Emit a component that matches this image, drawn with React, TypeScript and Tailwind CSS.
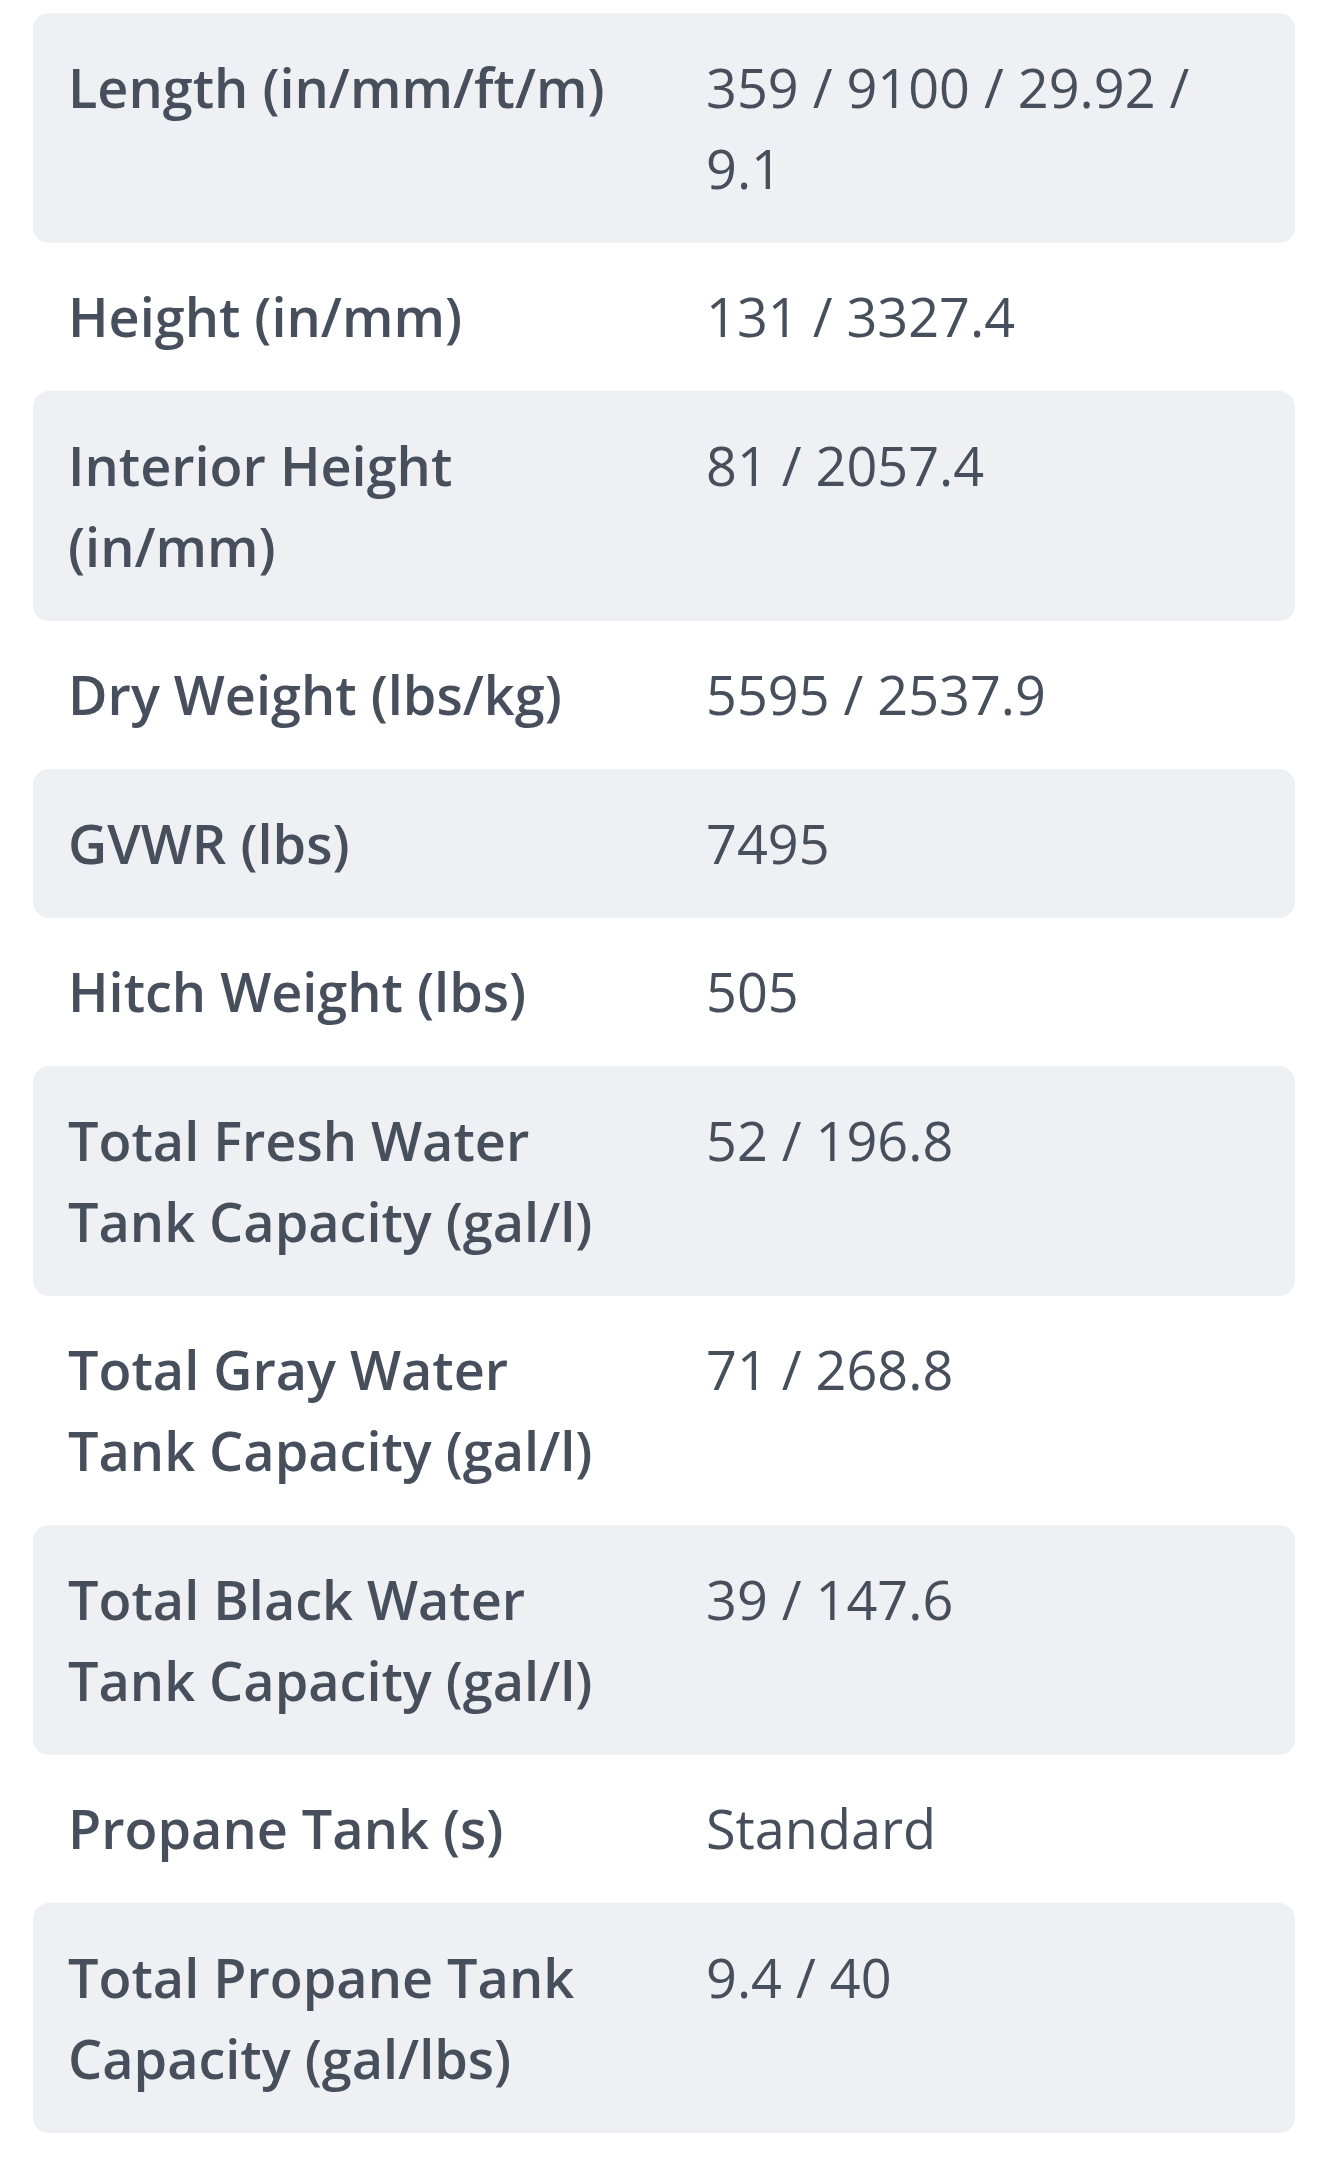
const specs: [string, string][] = [
  ['Length (in/mm/ft/m)', '359 / 9100 / 29.92 / 9.1'],
  ['Height (in/mm)', '131 / 3327.4'],
  ['Interior Height (in/mm)', '81 / 2057.4'],
  ['Dry Weight (lbs/kg)', '5595 / 2537.9'],
  ['GVWR (lbs)', '7495'],
  ['Hitch Weight (lbs)', '505'],
  ['Total Fresh Water Tank Capacity (gal/l)', '52 / 196.8'],
  ['Total Gray Water Tank Capacity (gal/l)', '71 / 268.8'],
  ['Total Black Water Tank Capacity (gal/l)', '39 / 147.6'],
  ['Propane Tank (s)', 'Standard'],
  ['Total Propane Tank Capacity (gal/lbs)', '9.4 / 40'],
]

export default function App() {
  return (
    <div className="min-h-screen bg-white px-[33px] pt-[13px] font-['Open_Sans',sans-serif] text-[#484f5c]">
      {specs.map(([label, value], i) => (
        <div
          key={label}
          className={`flex rounded-[16px] px-[35px] py-[33.75px] text-[54px] leading-[81px] ${
            i % 2 === 0 ? 'bg-[#eef0f4]' : 'bg-white'
          }`}
        >
          <div className="w-[638px] shrink-0 pr-[70px] font-semibold">{label}</div>
          <div className="min-w-0 flex-1 font-normal">{value}</div>
        </div>
      ))}
    </div>
  )
}
